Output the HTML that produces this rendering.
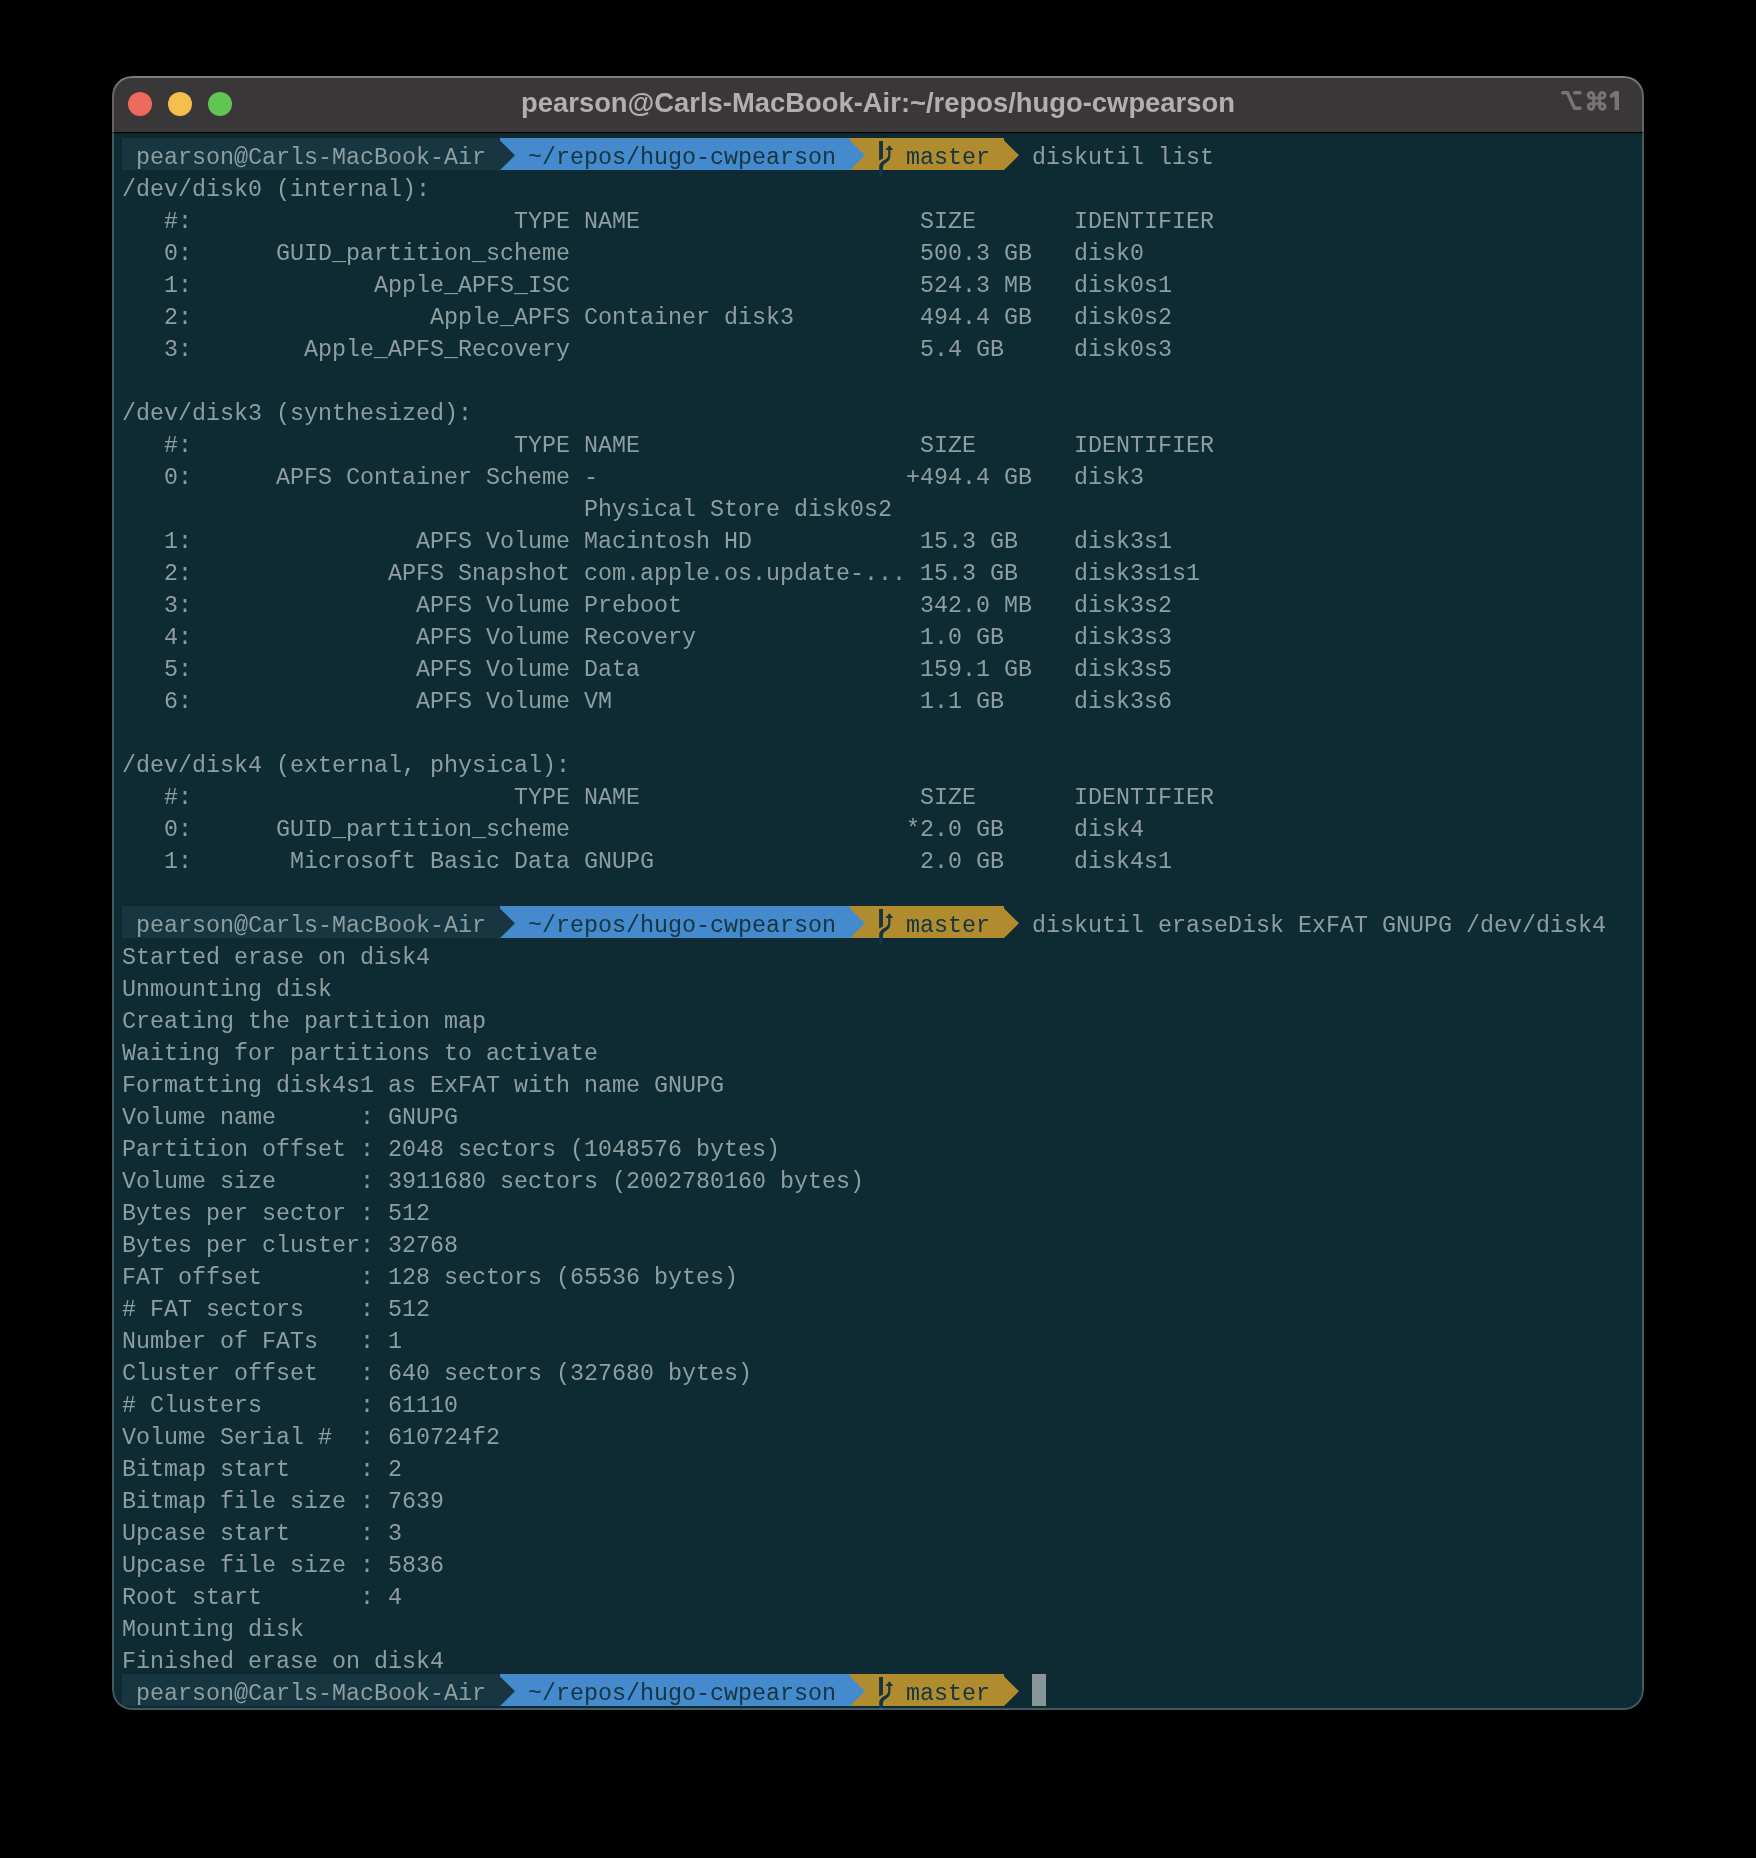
<!DOCTYPE html>
<html><head><meta charset="utf-8"><style>
html,body{margin:0;padding:0;background:#000;width:1756px;height:1858px;overflow:hidden}
#win{position:absolute;left:112px;top:76px;width:1532px;height:1634px;border-radius:20px;overflow:hidden;background:#0e2b33}
#tb{position:absolute;left:0;top:0;width:100%;height:56px;background:#3a3739}
#sep{position:absolute;left:0;top:56px;width:100%;height:1px;background:#000;border-bottom:1px solid #151b1d}
#bd{position:absolute;left:0;top:0;right:0;bottom:0;border-radius:20px;box-sizing:border-box;padding:2px;background:linear-gradient(to bottom,rgba(255,255,255,0.36) 0px,rgba(255,255,255,0.22) 22px);-webkit-mask:linear-gradient(#000 0 0) content-box,linear-gradient(#000 0 0);-webkit-mask-composite:xor;mask-composite:exclude}
.tl{position:absolute;width:24px;height:24px;border-radius:50%;top:16px}
#title{position:absolute;will-change:transform;left:0;width:100%;top:-1px;text-align:center;font-family:"Liberation Sans",sans-serif;font-weight:bold;font-size:27.4px;color:#b1afb1;line-height:56px;white-space:pre}
.r{position:absolute;left:0;will-change:transform;height:32px;white-space:pre;font-family:"Liberation Mono",monospace;font-size:23.33px;line-height:32px;color:#8e9ea0}
.t{position:absolute;top:0;white-space:pre}
.bgr{position:absolute;height:32px}
svg{position:absolute;overflow:visible}
</style></head><body>
<div id="win">

<div id="tb"></div><div id="sep"></div>
<div class="tl" style="left:16px;background:#ed6a5e"></div>
<div class="tl" style="left:56px;background:#f5bf4f"></div>
<div class="tl" style="left:96px;background:#61c554"></div>
<div id="title">pearson@Carls-MacBook-Air:~/repos/hugo-cwpearson</div>
<div class="bgr" style="left:10px;top:62px;width:378px;background:#173641"></div>
<div class="bgr" style="left:388px;top:62px;width:350px;background:#468ace"></div>
<div class="bgr" style="left:738px;top:62px;width:154px;background:#b18c2f"></div>
<svg style="left:388px;top:62px" width="15" height="32"><polygon points="0,2.6 15,17.3 0,32" fill="#173641"/></svg>
<svg style="left:738px;top:62px" width="15" height="32"><polygon points="0,2.6 15,17.3 0,32" fill="#468ace"/></svg>
<svg style="left:892px;top:62px" width="15" height="32"><polygon points="0,2.6 15,17.3 0,32" fill="#b18c2f"/></svg>
<svg style="left:758px;top:60px" width="30" height="44" viewBox="0 0 30 44"><polygon points="9.1,5.1 13,5.1 13,22.5 9.1,24.6" fill="#153541"/><path d="M9.2,40 L9.2,31 C9.2,27.5 11.5,25.5 14.5,24 C17.2,22.6 18.2,21 18.2,18.5 L18.2,13.9 L20.4,13.9 L20.4,19.5 C20.4,23 19,25 16.5,26.6 C13.8,28.3 12.9,29.8 12.9,32.5 L12.9,40 Z" fill="#153541"/><polygon points="19.35,9.3 23.3,14.1 15.4,14.1" fill="#153541"/></svg>
<div class="r" style="top:62px"><span class="t" style="left:24px;top:4px">pearson@Carls-MacBook-Air</span>
<span class="t" style="left:416px;top:4px;color:#153541">~/repos/hugo-cwpearson</span>
<span class="t" style="left:794px;top:4px;color:#153541">master</span>
<span class="t" style="left:906px;top:4px"> diskutil list</span>
</div>
<div class="r" style="top:94px"><span class="t" style="left:10px;top:4px">/dev/disk0 (internal):</span></div>
<div class="r" style="top:126px"><span class="t" style="left:10px;top:4px">   #:                       TYPE NAME                    SIZE       IDENTIFIER</span></div>
<div class="r" style="top:158px"><span class="t" style="left:10px;top:4px">   0:      GUID_partition_scheme                         500.3 GB   disk0</span></div>
<div class="r" style="top:190px"><span class="t" style="left:10px;top:4px">   1:             Apple_APFS_ISC                         524.3 MB   disk0s1</span></div>
<div class="r" style="top:222px"><span class="t" style="left:10px;top:4px">   2:                 Apple_APFS Container disk3         494.4 GB   disk0s2</span></div>
<div class="r" style="top:254px"><span class="t" style="left:10px;top:4px">   3:        Apple_APFS_Recovery                         5.4 GB     disk0s3</span></div>
<div class="r" style="top:318px"><span class="t" style="left:10px;top:4px">/dev/disk3 (synthesized):</span></div>
<div class="r" style="top:350px"><span class="t" style="left:10px;top:4px">   #:                       TYPE NAME                    SIZE       IDENTIFIER</span></div>
<div class="r" style="top:382px"><span class="t" style="left:10px;top:4px">   0:      APFS Container Scheme -                      +494.4 GB   disk3</span></div>
<div class="r" style="top:414px"><span class="t" style="left:10px;top:4px">                                 Physical Store disk0s2</span></div>
<div class="r" style="top:446px"><span class="t" style="left:10px;top:4px">   1:                APFS Volume Macintosh HD            15.3 GB    disk3s1</span></div>
<div class="r" style="top:478px"><span class="t" style="left:10px;top:4px">   2:              APFS Snapshot com.apple.os.update-... 15.3 GB    disk3s1s1</span></div>
<div class="r" style="top:510px"><span class="t" style="left:10px;top:4px">   3:                APFS Volume Preboot                 342.0 MB   disk3s2</span></div>
<div class="r" style="top:542px"><span class="t" style="left:10px;top:4px">   4:                APFS Volume Recovery                1.0 GB     disk3s3</span></div>
<div class="r" style="top:574px"><span class="t" style="left:10px;top:4px">   5:                APFS Volume Data                    159.1 GB   disk3s5</span></div>
<div class="r" style="top:606px"><span class="t" style="left:10px;top:4px">   6:                APFS Volume VM                      1.1 GB     disk3s6</span></div>
<div class="r" style="top:670px"><span class="t" style="left:10px;top:4px">/dev/disk4 (external, physical):</span></div>
<div class="r" style="top:702px"><span class="t" style="left:10px;top:4px">   #:                       TYPE NAME                    SIZE       IDENTIFIER</span></div>
<div class="r" style="top:734px"><span class="t" style="left:10px;top:4px">   0:      GUID_partition_scheme                        *2.0 GB     disk4</span></div>
<div class="r" style="top:766px"><span class="t" style="left:10px;top:4px">   1:       Microsoft Basic Data GNUPG                   2.0 GB     disk4s1</span></div>
<div class="bgr" style="left:10px;top:830px;width:378px;background:#173641"></div>
<div class="bgr" style="left:388px;top:830px;width:350px;background:#468ace"></div>
<div class="bgr" style="left:738px;top:830px;width:154px;background:#b18c2f"></div>
<svg style="left:388px;top:830px" width="15" height="32"><polygon points="0,2.6 15,17.3 0,32" fill="#173641"/></svg>
<svg style="left:738px;top:830px" width="15" height="32"><polygon points="0,2.6 15,17.3 0,32" fill="#468ace"/></svg>
<svg style="left:892px;top:830px" width="15" height="32"><polygon points="0,2.6 15,17.3 0,32" fill="#b18c2f"/></svg>
<svg style="left:758px;top:828px" width="30" height="44" viewBox="0 0 30 44"><polygon points="9.1,5.1 13,5.1 13,22.5 9.1,24.6" fill="#153541"/><path d="M9.2,40 L9.2,31 C9.2,27.5 11.5,25.5 14.5,24 C17.2,22.6 18.2,21 18.2,18.5 L18.2,13.9 L20.4,13.9 L20.4,19.5 C20.4,23 19,25 16.5,26.6 C13.8,28.3 12.9,29.8 12.9,32.5 L12.9,40 Z" fill="#153541"/><polygon points="19.35,9.3 23.3,14.1 15.4,14.1" fill="#153541"/></svg>
<div class="r" style="top:830px"><span class="t" style="left:24px;top:4px">pearson@Carls-MacBook-Air</span>
<span class="t" style="left:416px;top:4px;color:#153541">~/repos/hugo-cwpearson</span>
<span class="t" style="left:794px;top:4px;color:#153541">master</span>
<span class="t" style="left:906px;top:4px"> diskutil eraseDisk ExFAT GNUPG /dev/disk4</span>
</div>
<div class="r" style="top:862px"><span class="t" style="left:10px;top:4px">Started erase on disk4</span></div>
<div class="r" style="top:894px"><span class="t" style="left:10px;top:4px">Unmounting disk</span></div>
<div class="r" style="top:926px"><span class="t" style="left:10px;top:4px">Creating the partition map</span></div>
<div class="r" style="top:958px"><span class="t" style="left:10px;top:4px">Waiting for partitions to activate</span></div>
<div class="r" style="top:990px"><span class="t" style="left:10px;top:4px">Formatting disk4s1 as ExFAT with name GNUPG</span></div>
<div class="r" style="top:1022px"><span class="t" style="left:10px;top:4px">Volume name      : GNUPG</span></div>
<div class="r" style="top:1054px"><span class="t" style="left:10px;top:4px">Partition offset : 2048 sectors (1048576 bytes)</span></div>
<div class="r" style="top:1086px"><span class="t" style="left:10px;top:4px">Volume size      : 3911680 sectors (2002780160 bytes)</span></div>
<div class="r" style="top:1118px"><span class="t" style="left:10px;top:4px">Bytes per sector : 512</span></div>
<div class="r" style="top:1150px"><span class="t" style="left:10px;top:4px">Bytes per cluster: 32768</span></div>
<div class="r" style="top:1182px"><span class="t" style="left:10px;top:4px">FAT offset       : 128 sectors (65536 bytes)</span></div>
<div class="r" style="top:1214px"><span class="t" style="left:10px;top:4px"># FAT sectors    : 512</span></div>
<div class="r" style="top:1246px"><span class="t" style="left:10px;top:4px">Number of FATs   : 1</span></div>
<div class="r" style="top:1278px"><span class="t" style="left:10px;top:4px">Cluster offset   : 640 sectors (327680 bytes)</span></div>
<div class="r" style="top:1310px"><span class="t" style="left:10px;top:4px"># Clusters       : 61110</span></div>
<div class="r" style="top:1342px"><span class="t" style="left:10px;top:4px">Volume Serial #  : 610724f2</span></div>
<div class="r" style="top:1374px"><span class="t" style="left:10px;top:4px">Bitmap start     : 2</span></div>
<div class="r" style="top:1406px"><span class="t" style="left:10px;top:4px">Bitmap file size : 7639</span></div>
<div class="r" style="top:1438px"><span class="t" style="left:10px;top:4px">Upcase start     : 3</span></div>
<div class="r" style="top:1470px"><span class="t" style="left:10px;top:4px">Upcase file size : 5836</span></div>
<div class="r" style="top:1502px"><span class="t" style="left:10px;top:4px">Root start       : 4</span></div>
<div class="r" style="top:1534px"><span class="t" style="left:10px;top:4px">Mounting disk</span></div>
<div class="r" style="top:1566px"><span class="t" style="left:10px;top:4px">Finished erase on disk4</span></div>
<div class="bgr" style="left:10px;top:1598px;width:378px;background:#173641"></div>
<div class="bgr" style="left:388px;top:1598px;width:350px;background:#468ace"></div>
<div class="bgr" style="left:738px;top:1598px;width:154px;background:#b18c2f"></div>
<svg style="left:388px;top:1598px" width="15" height="32"><polygon points="0,2.6 15,17.3 0,32" fill="#173641"/></svg>
<svg style="left:738px;top:1598px" width="15" height="32"><polygon points="0,2.6 15,17.3 0,32" fill="#468ace"/></svg>
<svg style="left:892px;top:1598px" width="15" height="32"><polygon points="0,2.6 15,17.3 0,32" fill="#b18c2f"/></svg>
<svg style="left:758px;top:1596px" width="30" height="44" viewBox="0 0 30 44"><polygon points="9.1,5.1 13,5.1 13,22.5 9.1,24.6" fill="#153541"/><path d="M9.2,40 L9.2,31 C9.2,27.5 11.5,25.5 14.5,24 C17.2,22.6 18.2,21 18.2,18.5 L18.2,13.9 L20.4,13.9 L20.4,19.5 C20.4,23 19,25 16.5,26.6 C13.8,28.3 12.9,29.8 12.9,32.5 L12.9,40 Z" fill="#153541"/><polygon points="19.35,9.3 23.3,14.1 15.4,14.1" fill="#153541"/></svg>
<div class="r" style="top:1598px"><span class="t" style="left:24px;top:4px">pearson@Carls-MacBook-Air</span>
<span class="t" style="left:416px;top:4px;color:#153541">~/repos/hugo-cwpearson</span>
<span class="t" style="left:794px;top:4px;color:#153541">master</span>
</div>
<div class="bgr" style="left:920px;top:1598px;width:14px;background:#879699"></div>
<div id="bd"></div>
</div>
<svg style="left:1555px;top:85px" width="70" height="30" viewBox="0 0 70 30"><path d="M7.75,7.8 H12.5 L19.5,23.2 H24.95 M19.7,7.8 H24.95" fill="none" stroke="#767477" stroke-width="3.5" stroke-linecap="round" stroke-linejoin="round"/><path d="M38.7,10.2 A2.7,2.7 0 1 0 36.0,12.9 L47.3,12.9 A2.7,2.7 0 1 0 44.6,10.2 L44.6,21.5 A2.7,2.7 0 1 0 47.3,18.8 L36.0,18.8 A2.7,2.7 0 1 0 38.7,21.5 Z" fill="none" stroke="#767477" stroke-width="3.0"/><path d="M55.0,9.6 L59.8,6.0 H64.0 V24.9 H59.6 V11.6 L55.0,13.3 Z" fill="#767477"/></svg>
</body></html>
